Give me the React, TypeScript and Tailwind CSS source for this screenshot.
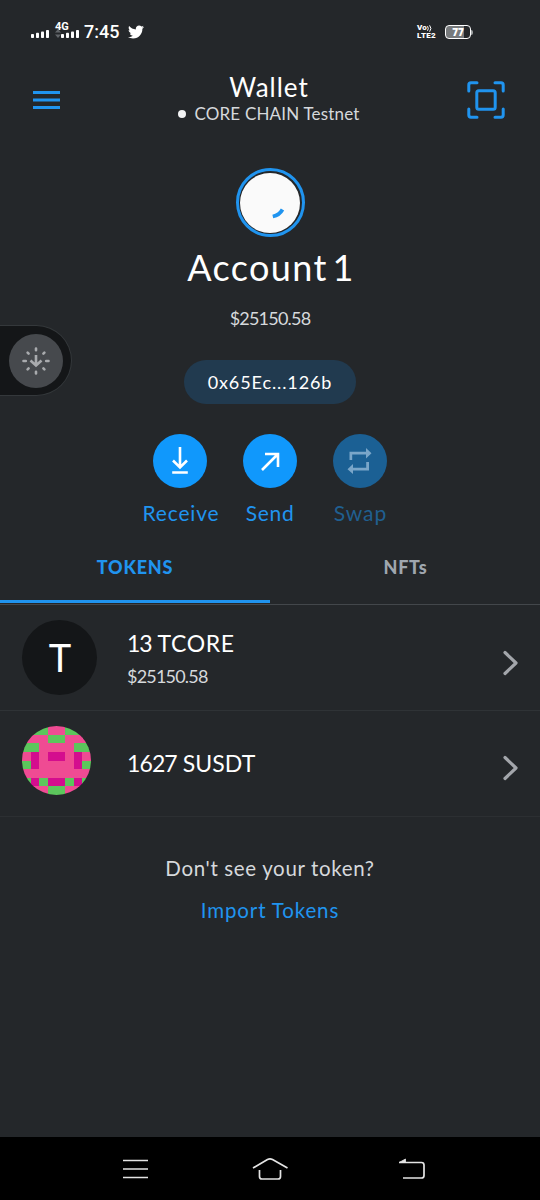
import React from 'react';
import { FaTwitter } from 'react-icons/fa';

const IDENTICON = [
    'pggppggp',
    'pppggppp',
    'ggppppgg',
    'pmpmmpmp',
    'gmppppmg',
    'pppppppp',
    'gmgmmgmg',
    'pppggppp',
];

const CELL_COLORS: Record<string, string> = {
    p: '#ef4b93',
    g: '#5cc65c',
    m: '#d40d8e',
};

const SignalBars = () => (
    <svg width="18" height="10" viewBox="0 0 18 10" fill="#fff">
        <rect x="0" y="5" width="3" height="4" rx="0.8" />
        <rect x="5" y="3.8" width="3" height="5.2" rx="0.8" />
        <rect x="10" y="2.4" width="3" height="6.6" rx="0.8" />
        <rect x="15" y="1" width="3" height="8" rx="0.8" />
    </svg>
);

const StatusBar = () => (
    <div className="flex h-16 items-start justify-between pl-[31px] pr-[67px] pt-5 text-white">
        <div className="flex h-6 items-center">
            <div className="pt-[3px]">
                <SignalBars />
            </div>
            <div className="ml-[6px] flex h-6 flex-col justify-start">
                <span className="h-[9px] font-[Roboto] text-[11px] font-bold leading-[14px]">4G</span>
                <div className="flex items-end">
                    <svg width="6" height="10" viewBox="0 0 6 10" fill="#62666a">
                        <path d="M3 0l3 3.5H0zM3 9L0 5.500h6z" />
                    </svg>
                    <SignalBars />
                </div>
            </div>
            <span className="ml-[5px] font-[Roboto] text-[18px] font-medium leading-6">7:45</span>
            <FaTwitter className="ml-[9px] h-4 w-4" />
        </div>
        <div className="flex h-6 items-center">
            <div className="flex flex-col font-[Roboto] text-[8px] font-black leading-[8px]">
                <div className="flex items-center">
                    <span>Vo</span>
                    <svg width="5" height="7" viewBox="0 0 5 7" fill="none" stroke="#fff" strokeWidth="1">
                        <path d="M0.500 1.200q1.600 2.300 0 4.600M2.600 0.300q2.600 3.200 0 6.400" />
                    </svg>
                </div>
                <span className="tracking-[0.3px]">LTE2</span>
            </div>
            <div className="ml-[9px] flex h-[14px] w-[26px] items-center justify-center rounded-[4px] border-[1.5px] border-white bg-linear-to-r from-[#777a7c] from-75% to-transparent to-75% font-['Open_Sans'] text-[10px] font-extrabold leading-none">
                77
            </div>
            <div className="h-[5px] w-[2px] rounded-r bg-[#a0a3a5]" />
        </div>
    </div>
);

const Header = () => (
    <header className="flex h-[72px] items-center justify-between pl-[33px] pr-[35px]">
        <svg width="38" height="20" viewBox="0 0 38 20" fill="#2094ef">
            <path d="M0 1h27v3H0zM0 8.500h27v3H0zM0 16h27v3H0z" />
        </svg>
        <div className="flex flex-col items-center pb-[6px]">
            <h1 className="text-[26px] leading-[34px] tracking-[1px] text-white">Wallet</h1>
            <div className="-mt-px flex items-center gap-2">
                <span className="h-2 w-2 rounded-full bg-[#f2f3f4]" />
                <span className="text-[17px] leading-[22px] tracking-[0.18px] text-[#d6d9dc]">CORE CHAIN Testnet</span>
            </div>
        </div>
        <svg
            width="38"
            height="38"
            viewBox="0 0 38 38"
            fill="none"
            stroke="#2094ef"
            strokeWidth="3"
            strokeLinecap="round"
            strokeLinejoin="round"
        >
            <path d="M1.800 10V4q0-2.200 2.200-2.200h6M28 1.800h6q2.200 0 2.200 2.200v6M36.200 28v6q0 2.200-2.200 2.200h-6M10 36.200H4q-2.200 0-2.200-2.200v-6" />
            <rect x="9.800" y="9.800" width="18.400" height="18.400" rx="2" />
        </svg>
    </header>
);

const SideHandle = () => (
    <div className="absolute left-0 top-[325px] flex h-[71px] w-[72px] items-center justify-end rounded-r-full border border-l-0 border-[#34383b] bg-[#141618] pr-2">
        <div className="flex h-[54px] w-[54px] items-center justify-center rounded-full bg-[#46494d]">
            <svg width="28" height="28" viewBox="0 0 28 28" fill="none" stroke="#a9abae" strokeWidth="2.600" strokeLinecap="round">
                <path d="M14 1.500v1.800M14 24.700v1.800M1.500 14h2.300M24.200 14h2.300M5.600 5.600l1 1M22.400 5.600l-1 1M5.600 22.400l1-1M22.400 22.400l-1-1" />
                <path d="M14 8v10.500M8.500 13.500l5.500 5 5.500-5" strokeLinecap="butt" />
            </svg>
        </div>
    </div>
);

interface ActionProps {
    label: React.ReactNode;
    disabled?: boolean;
    children: React.ReactNode;
}

const Action: React.FC<ActionProps> = ({ label, disabled, children }) => (
    <button className="flex w-[90px] flex-col items-center">
        <span
            className={`flex h-[54px] w-[54px] items-center justify-center rounded-full ${disabled ? 'bg-[#1b6094]' : 'bg-[#1098fc]'}`}
        >
            {children}
        </span>
        <span className={`mt-[13px] whitespace-nowrap text-[21px] leading-6 ${disabled ? 'text-[#205f90]' : 'text-[#2094ef]'}`}>
            {label}
        </span>
    </button>
);

const Chevron = () => (
    <svg width="16" height="26" viewBox="0 0 16 26" fill="none" stroke="#a3a6ab" strokeWidth="3.200" strokeLinecap="round" strokeLinejoin="round">
        <path d="M2 2.500L13 13 2 23.500" />
    </svg>
);

const Identicon = () => (
    <svg className="rounded-full" width="69" height="69" viewBox="0 0 8 8" shapeRendering="crispEdges">
        {IDENTICON.map((row, y) =>
            row.split('').map((cell, x) => (
                <rect key={`${x}-${y}`} x={x} y={y} width="1.02" height="1.02" fill={CELL_COLORS[cell]} />
            ))
        )}
    </svg>
);

export default function App() {
    return (
        <div className="relative flex h-[1200px] w-[540px] flex-col overflow-hidden bg-[#24272a] font-[Lato,sans-serif]">
            <StatusBar />
            <Header />
            <SideHandle />

            <section className="flex h-[392px] flex-col items-center pt-8">
                <div className="flex h-[69px] w-[69px] items-center justify-center rounded-full border-[3px] border-[#2094ef]">
                    <div className="h-[60px] w-[60px] rounded-full bg-[#fafafa]">
                        <svg width="60" height="60" viewBox="0 0 60 60" fill="none" stroke="#2094ef" strokeWidth="3.800">
                            <path d="M42.500 36.500Q39.500 42 32.800 43.500" />
                        </svg>
                    </div>
                </div>
                <h2 className="mt-[10px] pl-[2px] text-[36px] leading-10 tracking-[1.4px] [word-spacing:-4px] text-white">
                    Account <span className="-ml-[2px]">1</span>
                </h2>
                <p className="mt-[19px] text-[18px] leading-6 tracking-[-0.8px] text-[#d6d9dc]">$25150.58</p>
                <div className="mt-[30px] flex h-11 w-[172px] shrink-0 items-center justify-center rounded-full bg-[#213a4f] text-[18px] tracking-[0.9px] text-white">
                    0x65Ec...126b
                </div>
                <div className="mt-[30px] flex">
                    <Action label={<span className="pl-[2px] tracking-[0.85px]">Receive</span>}>
                        <svg width="20" height="30" viewBox="0 0 20 30" fill="none" stroke="#fff" strokeWidth="2.600">
                            <path d="M10 1v20M3 14.500l7 7 7-7M2.200 26.500h15.600" />
                        </svg>
                    </Action>
                    <Action label={<span className="tracking-[0.7px]">Send</span>}>
                        <svg width="22" height="22" viewBox="0 0 22 22" fill="none" stroke="#fff" strokeWidth="2.600">
                            <path d="M3 20L19 4M6 4h13v13" />
                        </svg>
                    </Action>
                    <Action disabled label={<span className="pl-px tracking-[1px]">Swap</span>}>
                        <svg width="26" height="28" viewBox="0 0 26 28" fill="#7aa6c9">
                            <path d="M2.500 13V4.700h16.500V1l5.500 5.200L19 11.500V7.500H5.200V13zM22 15v8.500H6V27L0.500 22.200 6 17v3.700h13.200V15z" />
                        </svg>
                    </Action>
                </div>
            </section>

            <nav className="grid h-[77px] grid-cols-2 border-b border-[#43474b] text-center text-[18px] font-black leading-6">
                <button className="mb-px flex justify-center border-b-[3px] border-[#2094ef] pt-[27px] tracking-[0.8px] text-[#2094ef]">TOKENS</button>
                <button className="flex justify-center pl-px pt-[27px] tracking-[0.8px] text-[#9fa6ae]">NFTs</button>
            </nav>

            <ul>
                <li className="flex h-[106px] items-start border-b border-[#2f3336] pl-[22px] pr-[21px]">
                    <div className="mt-[15px] flex h-[75px] w-[75px] items-center justify-center rounded-full bg-[#141618] pl-px text-[38px] text-white">
                        T
                    </div>
                    <div className="ml-[30px] mt-[23px] flex-1">
                        <p className="text-[23px] leading-[30px] text-white">
                            <span className="tracking-[-1px]">13</span> <span className="tracking-[0.6px]">TCORE</span>
                        </p>
                        <p className="mt-[6px] text-[18px] leading-6 tracking-[-0.8px] text-[#d6d9dc]">$25150.58</p>
                    </div>
                    <div className="mt-[45px]">
                        <Chevron />
                    </div>
                </li>
                <li className="flex h-[106px] items-start border-b border-[#2c2f32] pl-[22px] pr-[21px]">
                    <div className="mt-[15px]">
                        <Identicon />
                    </div>
                    <p className="ml-9 mt-[37px] flex-1 text-[23px] leading-[30px] text-white">
                        <span className="tracking-[-0.9px]">1627</span> <span className="tracking-[0.1px]">SUSDT</span>
                    </p>
                    <div className="mt-11">
                        <Chevron />
                    </div>
                </li>
            </ul>

            <footer className="flex flex-1 flex-col items-center pt-[37px] text-[20.5px] leading-7">
                <p className="tracking-[0.65px] text-[#d6d9dc]">Don't see your token?</p>
                <button className="mt-[14px] tracking-[0.85px] text-[#2094ef]">Import Tokens</button>
            </footer>

            <div className="flex h-[63px] items-center justify-between bg-black px-[114px]">
                <svg className="ml-[9px]" width="26" height="22" viewBox="0 0 26 22" stroke="#e4e4e4" strokeWidth="1.700">
                    <path d="M0 2.500h25M0 11h25M0 19.500h25" />
                </svg>
                <svg className="mr-[7px]" width="36" height="24" viewBox="0 0 36 24" fill="none" stroke="#e4e4e4" strokeWidth="1.700" strokeLinejoin="round">
                    <path d="M1 11L15.500 2.500q2.500-1.400 5 0L35.500 11M7.500 13v6.500q0 2.500 2.500 2.500h16q2.500 0 2.500-2.500V13" />
                </svg>
                <svg width="28" height="22" viewBox="0 0 28 22" fill="none" stroke="#e4e4e4" strokeWidth="1.700">
                    <path d="M1 4.500h22.500q2.500 0 2.500 2.500v10.500q0 2.500-2.500 2.500H5" />
                    <path d="M1.500 4.300L7.500 1v3.300z" fill="#e4e4e4" strokeWidth="0.800" />
                </svg>
            </div>
        </div>
    );
}
